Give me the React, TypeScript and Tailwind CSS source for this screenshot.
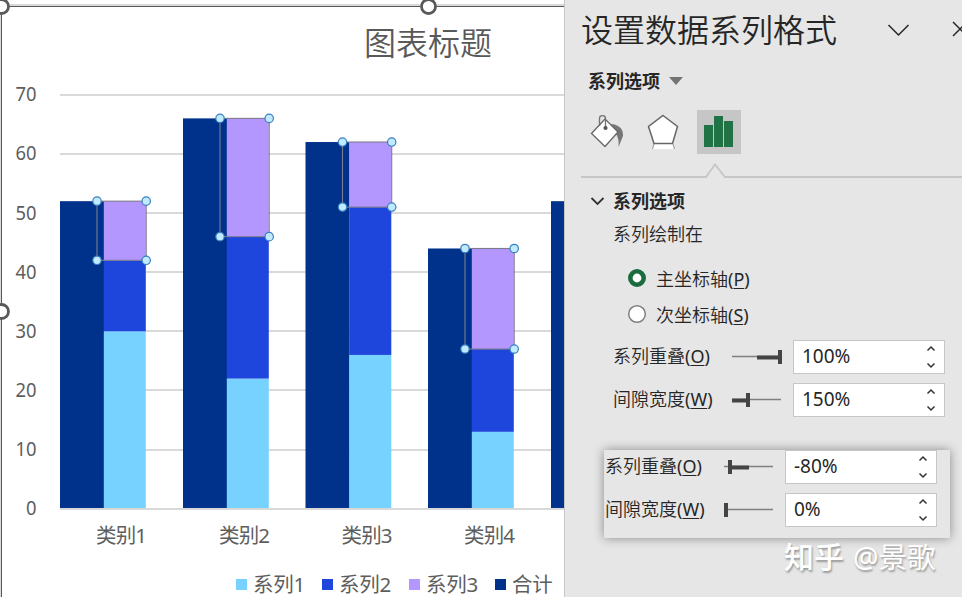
import React from "react";

interface Category {
  name: string;
  x: number;
  values: [number, number, number];
}

interface SpinRowProps {
  label: string;
  hotkey: string;
  value: string;
  knob: number;
  origin: number;
}

const categories: Category[] = [
  { name: "类别1", x: 60, values: [30, 12, 10] },
  { name: "类别2", x: 183, values: [22, 24, 20] },
  { name: "类别3", x: 305.5, values: [26, 25, 11] },
  { name: "类别4", x: 428, values: [13, 14, 17] },
];

const legend = [
  { name: "系列1", color: "bg-[#78d2ff]", width: "w-[86px]" },
  { name: "系列2", color: "bg-[#1e46dc]", width: "w-[87px]" },
  { name: "系列3", color: "bg-[#b496ff]", width: "w-[86px]" },
  { name: "合计", color: "bg-[#00328c]", width: "w-[60px]" },
];

const ticks = [70, 60, 50, 40, 30, 20, 10, 0];

// The svg starts 70px below the top of the chart area
const yOf = (value: number) => 438.7 - value * 5.914;

const Handle = ({ x, y }: { x: number; y: number }) => (
  <circle cx={x} cy={y} r={4.2} fill="#bfeaff" stroke="#3a7fbd" strokeWidth={1.2} />
);

const ColumnGroup = ({ category }: { category: Category }) => {
  const { x, name, values } = category;
  const [a, b, c] = values;
  const total = a + b + c;
  const left = x + 37;
  const right = x + 86.2;
  const top = yOf(total);
  const bottom = yOf(a + b);

  return (
    <g>
      <rect x={x} y={top} width={44} height={yOf(0) - top - 0.7} fill="#00328c" />
      <rect x={x + 43.8} y={yOf(a)} width={42} height={yOf(0) - yOf(a) - 0.7} fill="#78d2ff" />
      <rect x={x + 43.8} y={bottom} width={42} height={yOf(a) - bottom} fill="#1e46dc" />
      <rect x={x + 43.8} y={top} width={42} height={bottom - top} fill="#b496ff" />
      <rect x={left} y={top} width={right - left} height={bottom - top} fill="none" stroke="#7c7c8c" strokeWidth={1.1} />
      <Handle x={left} y={top} />
      <Handle x={right} y={top} />
      <Handle x={left} y={bottom} />
      <Handle x={right} y={bottom} />
      <text x={x + 36} y={473} fontSize={20.5} textLength={51} fill="#5e5e5e">{name}</text>
    </g>
  );
};

const Chart = () => (
  <section className="relative flex h-full w-[564px] shrink-0 flex-col overflow-hidden bg-white">
    <h1 className="mt-[20px] h-[50px] shrink-0 pl-[364px] text-[32px] leading-[46px] font-[350] text-[#595959]">图表标题</h1>
    <svg className="h-[490px] w-[564px] shrink-0" viewBox="0 0 564 490">
      {ticks.map((tick) => (
        <g key={tick}>
          <rect x={60} y={Math.round(yOf(tick)) - 1} width={504} height={2} fill="#d9d9d9" />
          <text x={36.5} y={yOf(tick) + 6.5} fontSize={19} textAnchor="end" textLength={tick ? 21 : 10.5} lengthAdjust="spacingAndGlyphs" fill="#5e5e5e">
            {tick}
          </text>
        </g>
      ))}
      {categories.map((category) => (
        <ColumnGroup key={category.name} category={category} />
      ))}
      <rect x={551} y={yOf(52)} width={13} height={306.8} fill="#00328c" />
    </svg>
    <div className="flex h-[48px] shrink-0 pl-[236px] text-[20.5px] leading-[48px] text-[#5e5e5e]">
      {legend.map((item) => (
        <div key={item.name} className={`flex shrink-0 items-center ${item.width}`}>
          <span className={`mr-[6px] h-[11px] w-[11px] shrink-0 ${item.color}`} />
          <span className="tracking-[-0.3px] whitespace-nowrap">{item.name}</span>
        </div>
      ))}
    </div>

    {/* Selection frame of the chart object */}
    <svg className="absolute inset-0 h-full w-full" viewBox="0 0 564 597">
      <path d="M0 5H564M0.5 5V597" stroke="#d9d9d9" strokeWidth={2} />
      <path d="M1.5 597V6.5H564" fill="none" stroke="#595959" strokeWidth={1} />
      {[[1.5, 6.5], [428.5, 6.5], [1.5, 311.5]].map(([x, y]) => (
        <circle key={`${x}-${y}`} cx={x} cy={y} r={7} fill="#fff" stroke="#595959" strokeWidth={2.8} />
      ))}
    </svg>
  </section>
);

const Label = ({ label, hotkey }: { label: string; hotkey: string }) => (
  <span className="whitespace-nowrap">
    {label}
    <span className="font-normal">
      (<span className="underline decoration-1 underline-offset-2">{hotkey}</span>)
    </span>
  </span>
);

const SpinRow = ({ label, hotkey, value, knob, origin }: SpinRowProps) => (
  <div className="flex h-[34px] items-center">
    <div className="-mt-[1px] w-[119px] shrink-0 text-[18px]">
      <Label label={label} hotkey={hotkey} />
    </div>
    <svg className="h-[16px] w-[52px] shrink-0" viewBox="0 0 52 16">
      <path d="M0 7.5H49" stroke="#7f7f7f" strokeWidth={1.4} />
      <path d={`M${origin} 8.5H${knob}`} stroke="#444" strokeWidth={4} />
      <path d={`M${knob} 1V15`} stroke="#444" strokeWidth={4} />
    </svg>
    <div className="ml-[9px] flex h-[34px] w-[152px] shrink-0 items-center justify-between border border-[#c6c6c6] bg-white pr-[8px] pl-[8px]">
      <span className="-mt-[2px] text-[19px] leading-[32px] font-normal">{value}</span>
      <svg className="h-[26px] w-[10px]" viewBox="0 0 10 26" fill="none" stroke="#333" strokeWidth={1.5}>
        <path d="M1.5 6.5L5 3L8.5 6.5M1.5 19.5L5 23L8.5 19.5" />
      </svg>
    </div>
  </div>
);

const RadioRow = ({ label, hotkey, checked }: { label: string; hotkey: string; checked?: boolean }) => (
  <div className="flex h-[36px] items-center pl-[62px] text-[18px]">
    <svg className="mr-[9px] -mt-[2px] h-[20px] w-[20px]" viewBox="0 0 20 20">
      <circle cx={10} cy={10} r={checked ? 6.7 : 8.3} fill="#fff" stroke={checked ? "#1a6b3e" : "#808080"} strokeWidth={checked ? 4.6 : 1.5} />
    </svg>
    <Label label={label} hotkey={hotkey} />
  </div>
);

const FormatPanel = () => (
  <aside className="flex h-full w-[398px] shrink-0 flex-col overflow-hidden border-l border-[#c6c6c6] bg-[#e6e6e6] text-[#262626]">
    <header className="flex h-[62px] shrink-0 items-center pl-[16px]">
      <h2 className="w-[306px] shrink-0 pb-[2px] text-[32px] leading-[58px] font-[350] whitespace-nowrap">设置数据系列格式</h2>
      <svg className="h-[24px] w-[75px] shrink-0" viewBox="0 0 75 24" fill="none" stroke="#262626" strokeWidth={1.5}>
        <path d="M1.5 6L11.5 16L21.5 6M66 3L80 17M66 17L80 3" />
      </svg>
    </header>
    <div className="flex h-[38px] shrink-0 items-center pl-[23px] text-[18px] font-bold">
      系列选项
      <svg className="ml-[9px] h-[8px] w-[14px]" viewBox="0 0 14 8">
        <path d="M0 0H14L7 8Z" fill="#737373" />
      </svg>
    </div>
    <div className="mt-[10px] flex h-[44px] shrink-0">
      <svg className="ml-[20px] h-[44px] w-[112px]" viewBox="0 0 112 44">
        <path d="M26 14C33 14.500 38.500 18 38 26L33.500 37C34 31 33.500 28 30 22Z" fill="#777" />
        <path d="M20 9L33 22L20 36.500L6.500 23.500Z" fill="#fff" stroke="#666" strokeWidth={1.3} />
        <path d="M14.500 16V8.500Q14.500 5.700 17.500 5.700Q20.500 5.700 20.500 8.500V17" fill="none" stroke="#737373" strokeWidth={1.3} />
        <circle cx={20.500} cy={18} r={2.1} fill="#555" />
        <path d="M69.500 34H87.500L89 39H68Z" fill="#fff" />
        <path d="M69 34L67.500 39M88 34L89.500 39" stroke="#999" />
        <path d="M78 5.500L92.500 16.500L87.500 33.500H69L63.500 16.500Z" fill="#fff" stroke="#666" strokeWidth={1.5} />
      </svg>
      <div className="h-[44px] w-[44px] bg-[#c6c6c6]">
        <svg className="h-[44px] w-[44px]" viewBox="0 0 44 44" fill="#217346">
          <path d="M7 15H16V37H7ZM17 6H26V37H17ZM27 11H36V37H27Z" />
        </svg>
      </div>
    </div>
    <svg className="mt-[8px] ml-[16px] h-[17px] w-[382px] shrink-0" viewBox="0 0 382 17" fill="none">
      <path d="M0 15H125L134 2.500L144 15H382" stroke="#c6c6c6" strokeWidth={1.8} />
    </svg>
    <div className="mt-[4px] flex h-[36px] shrink-0 items-center pl-[25px] text-[18px] font-bold">
      <svg className="mr-[8px] h-[10px] w-[15px]" viewBox="0 0 15 10" fill="none" stroke="#333" strokeWidth={1.8}>
        <path d="M1.500 2L7.500 8L13.500 2" />
      </svg>
      系列选项
    </div>
    <div className="h-[32px] shrink-0 pl-[48px] text-[18px] leading-[31px] font-[350]">系列绘制在</div>
    <div className="mt-[10px] shrink-0 font-[350]">
      <RadioRow label="主坐标轴" hotkey="P" checked />
      <RadioRow label="次坐标轴" hotkey="S" />
    </div>
    <div className="mt-[7px] flex shrink-0 flex-col gap-[9px] pl-[48px] font-[350]">
      <SpinRow label="系列重叠" hotkey="O" value="100%" origin={25} knob={48} />
      <SpinRow label="间隙宽度" hotkey="W" value="150%" origin={0} knob={16} />
    </div>
    <div className="mt-[33px] ml-[39px] flex h-[88px] w-[346px] shrink-0 flex-col gap-[9px] bg-[#e6e6e6] pl-[1px] font-[350] shadow-[0_0_10px_rgba(0,0,0,0.4)]">
      <SpinRow label="系列重叠" hotkey="O" value="-80%" origin={25} knob={6} />
      <SpinRow label="间隙宽度" hotkey="W" value="0%" origin={0} knob={2} />
    </div>
    <div className="mt-[-2px] flex h-[42px] shrink-0 items-center pl-[219px] text-[30px] leading-[42px] whitespace-nowrap text-white [text-shadow:1px_2px_2px_#999]">
      <span className="mr-[9px] font-medium">知乎</span>
      <span className="text-[28.5px]">@景歌</span>
    </div>
  </aside>
);

const App = () => (
  <main className="flex h-[597px] w-[962px] overflow-hidden bg-white font-['Noto_Sans','Noto_Sans_CJK_SC',sans-serif]">
    <Chart />
    <FormatPanel />
  </main>
);

export default App;
